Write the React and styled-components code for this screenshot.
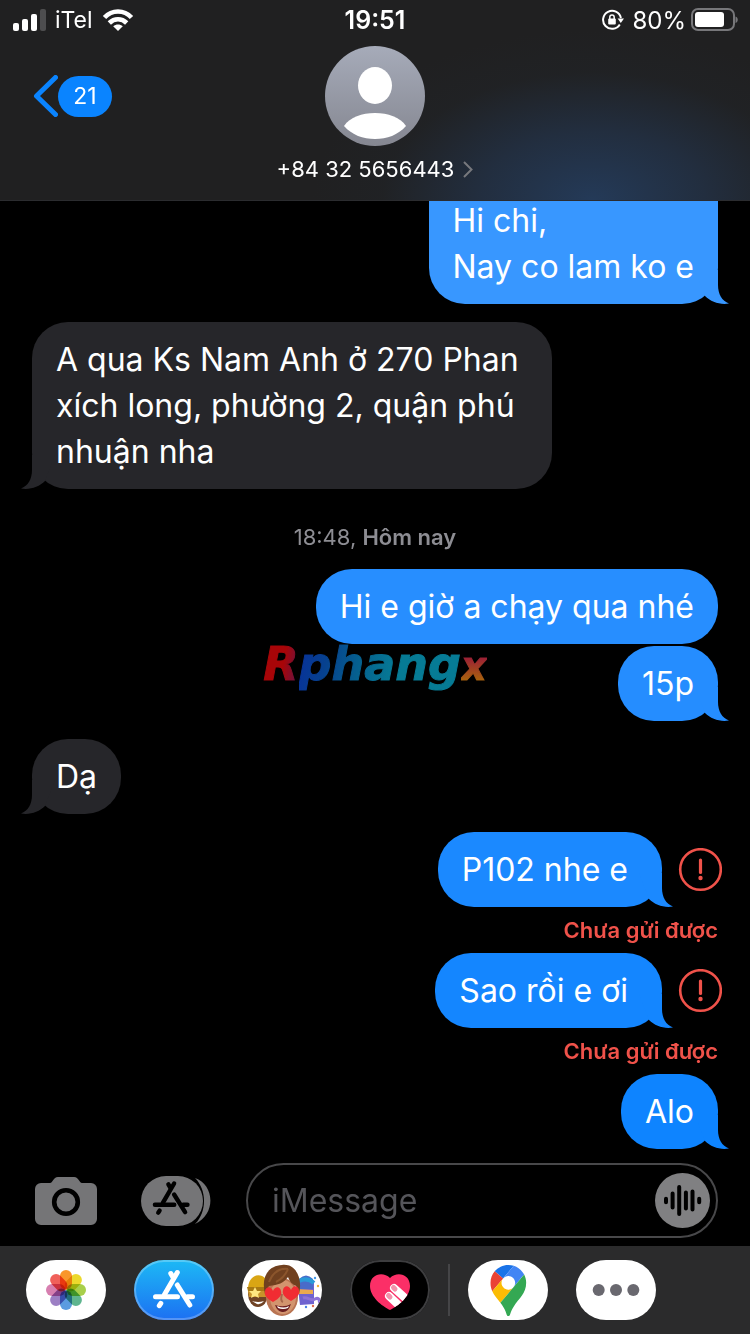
import React from "react";
import styled, { createGlobalStyle } from "styled-components";

const Global = createGlobalStyle`
  *, *::before, *::after { box-sizing: border-box; }
  body {
    margin: 0;
    background: #000;
    color: #fff;
    font-family: Inter, "Liberation Sans", sans-serif;
  }
  button { border: 0; padding: 0; margin: 0; background: none; color: inherit; font: inherit; cursor: pointer; }
  svg { display: block; }
`;

const Screen = styled.div`
  display: flex;
  flex-direction: column;
  height: 100vh;
`;

const Header = styled.header`
  flex: none;
  border-bottom: 1px solid #2b2c2f;
  background:
    radial-gradient(ellipse 280px 170px at 79% 100%, #243a58 0%, rgba(35, 52, 76, 0.7) 40%, rgba(33, 38, 44, 0.3) 75%, rgba(33, 33, 34, 0) 100%),
    #202021;
`;

const StatusBar = styled.div`
  display: grid;
  grid-template-columns: 1fr auto 1fr;
  align-items: center;
  height: 40px;
  padding: 0 12px;
  font-size: 23px;
`;

const StatusGroup = styled.div`
  display: flex;
  align-items: center;
  justify-content: ${(p) => (p.$end ? "flex-end" : "flex-start")};
  gap: ${(p) => (p.$end ? 4 : 9)}px;
`;

const Percent = styled.span`
  margin-left: 4px;
  font-size: 24px;
`;

const Clock = styled.time`
  font-size: 25px;
  font-weight: 600;
`;

const NavBar = styled.div`
  display: grid;
  grid-template-columns: 1fr auto 1fr;
  padding: 6px 32px 16px;
`;

const BackButton = styled.button`
  display: flex;
  align-items: center;
  justify-self: start;
  align-self: start;
  height: 100px;
`;

const Unread = styled.span`
  min-width: 54px;
  height: 41px;
  border-radius: 21px;
  background: #0a84ff;
  font-size: 23px;
  line-height: 40px;
  text-align: center;
`;

const Contact = styled.button`
  display: flex;
  flex-direction: column;
  align-items: center;
  gap: 8px;
`;

const ContactName = styled.span`
  display: flex;
  align-items: center;
  gap: 9px;
  font-size: 22px;
  line-height: 30px;
`;

const Scroller = styled.main`
  flex: 1;
  min-height: 0;
  display: flex;
  flex-direction: column-reverse;
  overflow-y: auto;
  scrollbar-width: none;
`;

const Thread = styled.div`
  position: relative;
  flex: none;
  display: flex;
  flex-direction: column;
  gap: 18px;
`;

const Group = styled.div`
  display: flex;
  flex-direction: column;
  align-items: ${(p) => (p.$mine ? "flex-end" : "flex-start")};
  gap: 2px;
  padding: 0 32px;
`;

const FailedGroup = styled(Group)`
  gap: 0;
`;

const FailedRow = styled.div`
  display: flex;
  align-items: center;
  gap: 16px;
  margin-right: -4px;
`;

const Bubble = styled.div`
  position: relative;
  max-width: 520px;
  padding: 15px ${(p) => (p.$failed ? 34 : 24)}px 14px 24px;
  border-radius: 36px;
  background: ${(p) => p.$tone};
  color: #fff;
  font-size: 32px;
  line-height: 46px;
  white-space: pre-line;
`;

const TailShape = styled.svg`
  position: absolute;
  bottom: 0;
  ${(p) => (p.$mine ? "right: -11px;" : "left: -11px; transform: scaleX(-1);")}
`;

const Stamp = styled.div`
  padding: 16px 0 0;
  color: #8d8d93;
  font-size: 22px;
  line-height: 28px;
  text-align: center;
`;

const StampDay = styled.span`
  font-weight: 600;
`;

const FailedLabel = styled.div`
  padding: 9px 0;
  color: #f0524a;
  font-size: 22px;
  font-weight: 600;
  line-height: 28px;
`;

const Watermark = styled.div`
  position: absolute;
  left: 0;
  right: 0;
  bottom: 456px;
  font: italic bold 46px/54px "DejaVu Sans", sans-serif;
  text-align: center;
  pointer-events: none;
`;

const Tint = styled.span`
  display: inline-block;
  background: ${(p) => p.$fill};
  background-clip: text;
  color: transparent;
  font-size: ${(p) => (p.$small ? 40 : 46)}px;
  -webkit-text-stroke: 1px transparent;
`;

const Composer = styled.form`
  flex: none;
  display: flex;
  align-items: center;
  padding: 14px 32px 8px 35px;
`;

const ToolButton = styled.button`
  flex: none;
  margin-right: ${(p) => p.$after}px;
`;

const Field = styled.div`
  flex: 1;
  min-width: 0;
  display: flex;
  align-items: center;
  height: 75px;
  padding: 0 6px 0 24px;
  border: 2px solid #48484a;
  border-radius: 38px;
`;

const Input = styled.input`
  flex: 1;
  min-width: 0;
  border: 0;
  padding: 0;
  outline: 0;
  background: transparent;
  color: #fff;
  font: 32px/46px Inter, "Liberation Sans", sans-serif;
  &::placeholder { color: #55555a; opacity: 1; }
`;

const AppStrip = styled.nav`
  flex: none;
  display: flex;
  align-items: center;
  gap: 28px;
  padding: 14px 26px;
  background: #2b2b2c;
`;

const AppButton = styled.button`
  flex: none;
  width: 80px;
  height: 60px;
  border-radius: 30px;
  overflow: hidden;
  background: ${(p) => p.$bg || "#fff"};
  box-shadow: ${(p) => (p.$ring ? `inset 0 0 0 2px ${p.$ring}` : "none")};
`;

const Divider = styled.span`
  width: 2px;
  height: 52px;
  margin: 0 -10px;
  background: #454547;
`;

const Tail = ({ mine, tone }) => (
  <TailShape $mine={mine} width="34" height="34" viewBox="0 0 34 34" fill={tone} aria-hidden="true">
    <path d="M0 0H23V15C23 24 27 31 34 33.500C25 35 16 32 10 26Z" />
  </TailShape>
);

const Message = ({ mine, failed, tone = "#26262a", tail = true, children }) => (
  <Bubble $tone={tone} $failed={failed}>
    {children}
    {tail && <Tail mine={mine} tone={tone} />}
  </Bubble>
);

const FailedMessage = ({ tone, children }) => (
  <FailedGroup $mine>
    <FailedRow>
      <Message mine failed tone={tone}>{children}</Message>
      <button type="button" aria-label="!">
        <svg width="44" height="44" viewBox="0 0 44 44" fill="none" stroke="#f0524a">
          <circle cx="22.500" cy="21.500" r="20.300" strokeWidth="2.600" />
          <path d="M22.500 12V24.500" strokeWidth="3.200" strokeLinecap="round" />
          <circle cx="22.500" cy="30" r="2.200" fill="#f0524a" stroke="none" />
        </svg>
      </button>
    </FailedRow>
    <FailedLabel>Chưa gửi được</FailedLabel>
  </FailedGroup>
);

const SignalIcon = () => (
  <svg width="34" height="22" viewBox="0 0 34 22" fill="#fff">
    <rect x="1" y="14" width="6" height="8" rx="2" />
    <rect x="10" y="10" width="6" height="12" rx="2" />
    <rect x="19" y="5" width="6" height="17" rx="2" />
    <rect x="28" y="0" width="6" height="22" rx="2" fill="#4d4d4f" />
  </svg>
);

const WifiIcon = () => (
  <svg width="32" height="22" viewBox="0 0 32 22" fill="none" stroke="#fff" strokeWidth="4.600">
    <path d="M2.500 8.500C10 0.500 22 0.500 29.500 8.500" />
    <path d="M7.300 14C12.300 9 19.700 9 24.700 14" />
    <path d="M11.200 17.200C14 14.800 18 14.800 20.800 17.200L16 22Z" fill="#fff" stroke="none" />
  </svg>
);

const RotationLockIcon = () => (
  <svg width="22" height="22" viewBox="0 0 22 22" fill="none" stroke="#fff" strokeWidth="2">
    <path d="M17.800 15.500A9 9 0 1 1 18.900 9" />
    <path d="M15.600 9.500H22L18.800 14Z" fill="#fff" stroke="none" />
    <rect x="6.200" y="9.600" width="7.600" height="6" rx="1" fill="#fff" stroke="none" />
    <path d="M7.800 10V8.200A2.200 2.200 0 0 1 12.200 8.200V10" strokeWidth="1.500" />
  </svg>
);

const BatteryIcon = () => (
  <svg width="48" height="24" viewBox="0 0 48 24">
    <rect x="2" y="1" width="42" height="21" rx="6" fill="none" stroke="#77777a" strokeWidth="2" />
    <rect x="5" y="4" width="29" height="15" rx="3" fill="#fff" />
    <path d="M45.500 8.500C48.500 9.500 48.500 14 45.500 15Z" fill="#77777a" />
  </svg>
);

const Avatar = () => (
  <svg width="100" height="100" viewBox="0 0 100 100">
    <defs>
      <linearGradient id="avatarFill" x1="0" y1="0" x2="0" y2="1">
        <stop offset="0" stopColor="#a6abb9" />
        <stop offset="1" stopColor="#858791" />
      </linearGradient>
    </defs>
    <circle cx="50" cy="50" r="50" fill="url(#avatarFill)" />
    <ellipse cx="50" cy="39.500" rx="17" ry="18.500" fill="#fff" />
    <path d="M19 80C25 71 37 67 50 67S75 71 81 80C73 89 62 93 50 93S27 89 19 80Z" fill="#fff" />
  </svg>
);

const StoreGlyph = () => (
  <g fill="none" strokeWidth="5" strokeLinecap="round">
    <path d="M43.300 12.500L30.500 34.500" />
    <path d="M36.800 13.500L39 17.300" />
    <path d="M43.300 25L55.800 45" />
    <path d="M21.500 36.700H43.500M53.500 36.700H58.500" />
    <path d="M26.800 43.300L25.300 45.600" />
  </g>
);

const CameraIcon = () => (
  <svg width="62" height="48" viewBox="0 0 62 48">
    <path d="M6 6H15C18 6 18 0 23 0H39C44 0 44 6 47 6H56A6 6 0 0 1 62 12V42A6 6 0 0 1 56 48H6A6 6 0 0 1 0 42V12A6 6 0 0 1 6 6Z" fill="#757577" />
    <circle cx="31" cy="25" r="11.800" fill="none" stroke="#000" strokeWidth="4.600" />
  </svg>
);

const StoreDrawerIcon = () => (
  <svg width="70" height="50" viewBox="0 0 70 50">
    <path d="M54 2C73 8 76 38 54 48C66 36 66 14 54 2Z" fill="#757577" />
    <rect width="62" height="50" rx="25" fill="#757577" />
    <g transform="translate(-5 -3.500) scale(0.880)" stroke="#000">
      <StoreGlyph />
    </g>
  </svg>
);

const AudioIcon = () => (
  <svg width="55" height="55" viewBox="0 0 55 55">
    <circle cx="27.500" cy="27.500" r="27.500" fill="#808082" />
    <path d="M11 25.800V29.200M17.600 20.500V34.500M24.200 14V41M30.900 19.500V35.500M37.500 18.500V36.500M44.200 25.800V29.200" stroke="#000" strokeWidth="4" strokeLinecap="round" />
  </svg>
);

const petals = ["#f9962b", "#ecd92c", "#a8cf4b", "#5fb58f", "#5b9be0", "#9c7fc4", "#d77fb0", "#f0605a"];

const PhotosArt = () => (
  <svg width="80" height="60" viewBox="0 0 80 60">
    {petals.map((color, i) => (
      <rect
        key={color}
        x="34"
        y="10"
        width="12"
        height="19.500"
        rx="6"
        fill={color}
        transform={`rotate(${i * 45} 40 30)`}
        style={{ mixBlendMode: "multiply" }}
      />
    ))}
  </svg>
);

const StoreArt = () => (
  <svg width="80" height="60" viewBox="0 0 80 60" stroke="#fff">
    <StoreGlyph />
  </svg>
);

const heart = "M0 8C-7 4-9 1-8-3C-7-8-2-8 0-3C2-8 7-8 8-3C9 1 7 4 0 8Z";

const MemojiArt = () => (
  <svg width="80" height="60" viewBox="0 0 80 60">
    <path d="M55 20L66 17L72 21V44L58 45Z" fill="#6f62cf" />
    <path d="M57 19Q64 12 71 19V29H57Z" fill="#496bc9" />
    <path d="M57 21Q65 17 72 23" fill="none" stroke="#299ad8" strokeWidth="4" />
    <path d="M55 29L71 30V34H55Z" fill="#e9a94f" />
    <path d="M61 38C66 36 68 42 73 39C77 37 79 41 76 42" fill="none" stroke="#8c72d8" strokeWidth="3" />
    <circle cx="73" cy="18" r="1.200" fill="#469ae8" />
    <circle cx="76" cy="26" r="1.200" fill="#f2b23a" />
    <circle cx="71" cy="46" r="1.200" fill="#e26a4d" />
    <circle cx="64" cy="47" r="1.200" fill="#497fe3" />
    <ellipse cx="16" cy="34" rx="10" ry="13" fill="#704325" />
    <path d="M6 29C6 11 26 11 27 28Z" fill="#d9a514" />
    <path d="M5 27H26V31H6Z" fill="#a87912" />
    <path d="M6 31H27V37H7Z" fill="#c8932a" />
    <path d="M13 27L15 31L19 31L16 34L17 38L13 36L9 38L10 34L7 31L11 31Z" fill="#ffe680" />
    <path d="M10 41Q16 43 22 41Q19 45 15 44Z" fill="#fff" />
    <ellipse cx="40" cy="37" rx="16" ry="19" fill="#b97452" />
    <ellipse cx="41" cy="37" rx="13" ry="17" fill="#d2946e" />
    <path d="M23 34C19 18 25 6 40 5C54 3 61 19 57 34L54 26C50 24 48 22 46 17C42 23 36 25 27 26Z" fill="#70401f" />
    <path d="M27 22C31 12 37 8 46 9M34 22C40 19 44 14 46 9" fill="none" stroke="#8b552c" strokeWidth="2" />
    <path d="M40 34Q38 41 41 42" fill="none" stroke="#a8674a" strokeWidth="2" />
    <path d={heart} fill="#f12c32" transform="translate(31 34)" />
    <path d={heart} fill="#f12c32" transform="translate(49 33)" />
    <path d="M33 45Q42 48 49 44Q46 53 40 52Q35 51 33 45Z" fill="#6c1f20" />
    <path d="M35 46Q42 49 47 46L46 48Q41 50 36 48Z" fill="#fff" />
  </svg>
);

const TouchArt = () => (
  <svg width="80" height="60" viewBox="0 0 80 60">
    <defs>
      <clipPath id="touchHeart">
        <path d="M40 50C32 46 20 37 20 26C20 14 33 11 40 18C47 11 60 14 60 26C60 37 48 46 40 50Z" />
      </clipPath>
    </defs>
    <g clipPath="url(#touchHeart)">
      <rect width="80" height="60" fill="#fb2f67" />
      <path d="M44 28L64 46M39 36L58 54" stroke="#fff" strokeWidth="8" strokeLinecap="round" />
      <path d="M43.500 27.500L45 29M38.500 35.500L40 37" stroke="#f293ac" strokeWidth="5" strokeLinecap="round" />
    </g>
  </svg>
);

const MapsArt = () => (
  <svg width="80" height="60" viewBox="0 0 80 60">
    <g transform="translate(22.500 5) scale(0.386)">
      <path fill="#1a73e8" d="M60.200 2.200C55.800.8 51 0 46.100 0 32 0 19.300 6.400 10.800 16.500l21.800 18.300L60.200 2.200z" />
      <path fill="#ea4335" d="M10.800 16.500C4.100 24.500 0 34.900 0 46.100c0 8.700 1.700 15.700 4.600 22l28-33.300-21.800-18.300z" />
      <path fill="#4285f4" d="M46.200 28.500c9.800 0 17.700 7.900 17.700 17.700 0 4.300-1.600 8.300-4.200 11.400 0 0 13.900-16.600 27.500-32.700-5.600-10.800-15.300-19-27-22.700L32.600 34.800c3.300-3.800 8.100-6.300 13.600-6.300" />
      <path fill="#fbbc04" d="M46.200 63.800c-9.800 0-17.700-7.900-17.700-17.700 0-4.300 1.500-8.300 4.100-11.300l-28 33.300c4.800 10.600 12.800 19.200 21 29.900l34.100-40.500c-3.300 3.900-8.100 6.300-13.500 6.300" />
      <path fill="#34a853" d="M59.100 109.200c15.400-24.100 33.300-35 33.300-63 0-7.700-1.900-14.900-5.200-21.300L25.600 98c2.600 3.400 5.300 7.300 7.900 11.300 9.400 14.500 6.800 23.100 12.800 23.100s3.400-8.700 12.800-23.200" />
    </g>
  </svg>
);

const MoreArt = () => (
  <svg width="80" height="60" viewBox="0 0 80 60" fill="#69686f">
    <circle cx="22.700" cy="30" r="6" />
    <circle cx="40" cy="30" r="6" />
    <circle cx="57.300" cy="30" r="6" />
  </svg>
);

export default function App() {
  return (
    <Screen>
      <Global />
      <Header>
        <StatusBar>
          <StatusGroup>
            <SignalIcon />
            <span>iTel</span>
            <WifiIcon />
          </StatusGroup>
          <Clock>19:51</Clock>
          <StatusGroup $end>
            <RotationLockIcon />
            <Percent>80%</Percent>
            <BatteryIcon />
          </StatusGroup>
        </StatusBar>
        <NavBar>
          <BackButton type="button">
            <svg width="26" height="42" viewBox="0 0 26 42" fill="none" stroke="#0a84ff" strokeWidth="5" strokeLinecap="round" strokeLinejoin="round">
              <path d="M23.500 2.500L4.500 21L23.500 39.500" />
            </svg>
            <Unread>21</Unread>
          </BackButton>
          <Contact type="button">
            <Avatar />
            <ContactName>
              +84 32 5656443
              <svg width="10" height="18" viewBox="0 0 10 18" fill="none" stroke="#77787d" strokeWidth="2">
                <path d="M1 2L8.500 9.500L1 17" />
              </svg>
            </ContactName>
          </Contact>
        </NavBar>
      </Header>

      <Scroller>
        <Thread>
          <Group $mine>
            <Message mine tone="#3897ff">{"\nHi chi,\nNay co lam ko e"}</Message>
          </Group>
          <Group>
            <Message>A qua Ks Nam Anh ở 270 Phan xích long, phường 2, quận phú nhuận nha</Message>
          </Group>
          <Stamp>
            18:48, <StampDay>Hôm nay</StampDay>
          </Stamp>
          <Group $mine>
            <Message mine tone="#278eff" tail={false}>Hi e giờ a chạy qua nhé</Message>
            <Message mine tone="#258dff">15p</Message>
          </Group>
          <Group>
            <Message>Dạ</Message>
          </Group>
          <div>
            <FailedMessage tone="#1b89ff">P102 nhe e</FailedMessage>
            <FailedMessage tone="#1486ff">Sao rồi e ơi</FailedMessage>
            <Group $mine>
              <Message mine tone="#0e84ff">Alo</Message>
            </Group>
          </div>
          <Watermark>
            <Tint $fill="linear-gradient(100deg, #a80508 55%, #5a1650 100%)">R</Tint>
            <Tint $fill="linear-gradient(100deg, #08309a 0%, #06418f 18%, #05618f 38%, #067b95 60%)">phang</Tint>
            <Tint $small $fill="linear-gradient(180deg, #9c2035 35%, #a8600f 75%)">x</Tint>
          </Watermark>
        </Thread>
      </Scroller>

      <Composer onSubmit={(e) => e.preventDefault()}>
        <ToolButton type="button" aria-label="Camera" $after={44}>
          <CameraIcon />
        </ToolButton>
        <ToolButton type="button" aria-label="App Store" $after={35}>
          <StoreDrawerIcon />
        </ToolButton>
        <Field>
          <Input type="text" placeholder="iMessage" aria-label="iMessage" />
          <button type="button" aria-label="Audio">
            <AudioIcon />
          </button>
        </Field>
      </Composer>

      <AppStrip>
        <AppButton type="button" aria-label="Photos"><PhotosArt /></AppButton>
        <AppButton type="button" aria-label="App Store" $bg="linear-gradient(#1db9f5, #1c70f2)" $ring="rgba(255, 255, 255, 0.25)">
          <StoreArt />
        </AppButton>
        <AppButton type="button" aria-label="Memoji"><MemojiArt /></AppButton>
        <AppButton type="button" aria-label="Digital Touch" $bg="#000" $ring="#3d3d3f"><TouchArt /></AppButton>
        <Divider />
        <AppButton type="button" aria-label="Google Maps"><MapsArt /></AppButton>
        <AppButton type="button" aria-label="More"><MoreArt /></AppButton>
      </AppStrip>
    </Screen>
  );
}
